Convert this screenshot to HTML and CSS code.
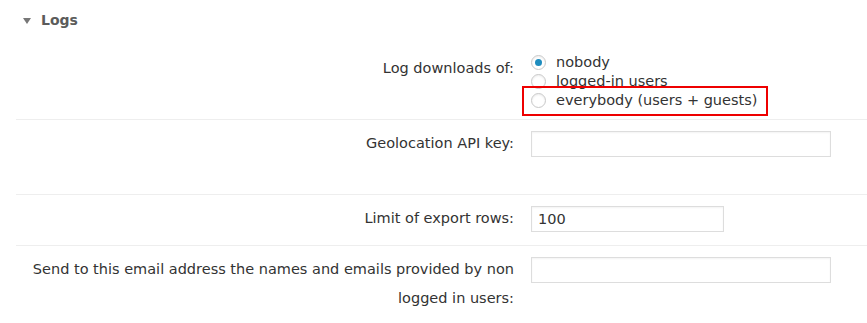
FILE: index.html
```html
<!DOCTYPE html>
<html lang="en">
<head>
  <meta charset="UTF-8" />
  <title>Logs settings</title>
  <link rel="stylesheet" href="styles.css">
</head>
<body>
  <div class="section">
    <div class="section-title"><span class="arrow"></span>Logs</div>

    <div class="row first">
      <div class="label">Log downloads of:</div>
      <div class="field">
        <div class="radios">
          <label class="radio"><input type="radio" name="logdl" checked> nobody</label>
          <label class="radio"><input type="radio" name="logdl"> logged-in users</label>
          <label class="radio highlight"><input type="radio" name="logdl"> everybody (users + guests)</label>
        </div>
      </div>
    </div>

    <div class="row row-tall">
      <div class="label">Geolocation API key:</div>
      <div class="field"><input type="text" class="text wide"></div>
    </div>

    <div class="row">
      <div class="label">Limit of export rows:</div>
      <div class="field"><input type="text" class="text short" value="100"></div>
    </div>

    <div class="row">
      <div class="label">Send to this email address the names and emails provided by non logged in users:</div>
      <div class="field"><input type="text" class="text wide"></div>
    </div>
  </div>
</body>
</html>
```

FILE: styles.css
```css
body {
  margin: 0;
  font-family: "DejaVu Sans", Verdana, sans-serif;
  font-size: 14.5px;
  color: #333;
  background: #fff;
}
.section {
  padding-left: 16px;
}
.section-title {
  display: flex;
  align-items: center;
  height: 40px;
  margin-bottom: 4px;
  font-weight: bold;
  font-size: 14px;
  color: #5b5b5b;
  padding-left: 7px;
}
.arrow {
  width: 0;
  height: 0;
  border-left: 4px solid transparent;
  border-right: 4px solid transparent;
  border-top: 6px solid #777;
  margin-right: 10px;
  margin-top: 1px;
}
.row {
  display: flex;
  border-top: 1px solid #eee;
  padding: 9px 0 12px;
}
.row.first {
  border-top: none;
  padding: 10px 0 9px;
}
.row-tall {
  padding-bottom: 36px;
}
.label {
  box-sizing: border-box;
  width: 498px;
  padding-left: 10px;
  text-align: right;
  line-height: 29px;
}
.field {
  margin-left: 17px;
  padding-top: 2px;
}
.radios {
  display: flex;
  flex-direction: column;
  align-items: flex-start;
  margin-top: -3px;
}
.radio {
  display: flex;
  align-items: center;
  height: 19px;
  line-height: 19px;
  position: relative;
}
.radio.highlight::before {
  content: "";
  position: absolute;
  left: -9px;
  right: -11px;
  top: -5px;
  bottom: -6px;
  border: 2px solid #e00;
}
.radio input {
  appearance: none;
  -webkit-appearance: none;
  width: 15px;
  height: 15px;
  margin: 0 10px 0 0;
  border: 1px solid #c8c8c8;
  border-radius: 50%;
  background: #fff;
  box-shadow: inset 0 1px 2px rgba(0,0,0,0.08);
  position: relative;
}
.radio input:checked::after {
  content: "";
  position: absolute;
  left: 3px;
  top: 3px;
  width: 7px;
  height: 7px;
  border-radius: 50%;
  background: #1e8cbe;
}
.text {
  box-sizing: border-box;
  height: 26px;
  border: 1px solid #ddd;
  box-shadow: inset 0 1px 2px rgba(0,0,0,0.05);
  font-family: inherit;
  font-size: 14.5px;
  color: #333;
  padding: 3px 6px;
  margin: 0;
}
.wide {
  width: 300px;
}
.short {
  width: 193px;
}
```
